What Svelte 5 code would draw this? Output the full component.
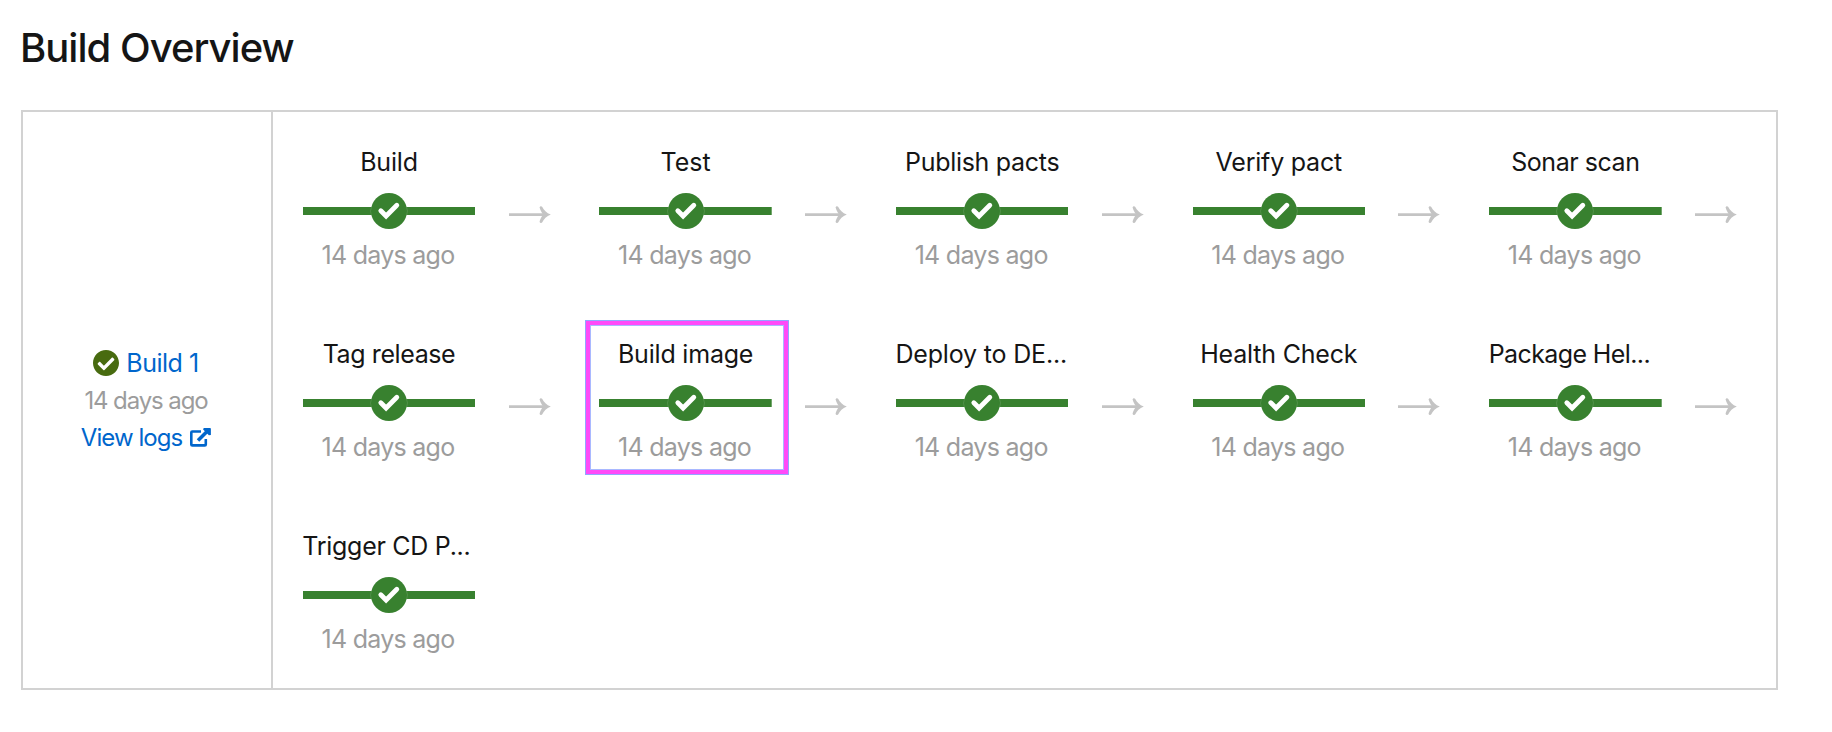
<script>
  const rows = [
    [
      { name: 'Build', tracking: -0.2 },
      { name: 'Test', tracking: 0 },
      { name: 'Publish pacts', tracking: -0.3 },
      { name: 'Verify pact', tracking: -0.22 },
      { name: 'Sonar scan', tracking: -0.45 }
    ],
    [
      { name: 'Tag release', tracking: -0.4 },
      { name: 'Build image', tracking: -0.2, selected: true },
      { name: 'Deploy to DE...', tracking: -0.18, clipped: true },
      { name: 'Health Check', tracking: -0.2 },
      { name: 'Package Hel...', tracking: -0.6, clipped: true }
    ],
    [{ name: 'Trigger CD P...', tracking: -0.28, clipped: true, last: true }]
  ];
</script>

<main>
  <h1>Build Overview</h1>
  <section class="panel">
    <aside>
      <div class="build">
        <svg class="status" viewBox="8 8 496 496"><path fill="#486b10" d="M504 256c0 136.967-111.033 248-248 248S8 392.967 8 256 119.033 8 256 8s248 111.033 248 248zM227.314 387.314l184-184c6.248-6.248 6.248-16.379 0-22.627l-22.627-22.627c-6.248-6.249-16.379-6.249-22.628 0L216 308.118l-70.059-70.059c-6.248-6.248-16.379-6.248-22.628 0l-22.627 22.627c-6.248 6.248-6.248 16.379 0 22.627l104 104c6.249 6.249 16.379 6.249 22.628.001z" /></svg>
        <a href="#build">Build 1</a>
      </div>
      <div class="when">14 days ago</div>
      <a class="logs" href="#logs">
        <span>View logs</span>
        <svg viewBox="0 0 21 19"><path fill="none" stroke="currentColor" stroke-width="2.6" d="M11 3.5H2.3a1 1 0 0 0-1 1V16.4a1 1 0 0 0 1 1H14.8a1 1 0 0 0 1-1V11" /><path fill="none" stroke="currentColor" stroke-width="3.6" d="M8 12.5L17.500 3" /><path fill="currentColor" d="M13.7 0H20a.9.9 0 0 1 .9.9V7l-2 .2-5.8-5.8z" /></svg>
      </a>
    </aside>
    <div class="pipeline">
      {#each rows as row}
        {#each row as step}
          <div class="cell">
            <div class="step" class:selected={step.selected}>
              <div class="name" class:clipped={step.clipped} style="letter-spacing: {step.tracking}px">{step.name}</div>
              <div class="track">
                <div class="dot">
                  <svg viewBox="0 0 36 36"><path fill="none" stroke="#fff" stroke-width="4.8" stroke-linecap="round" stroke-linejoin="miter" d="M9.800 17.700L15.100 23L25.800 12.300" /></svg>
                </div>
              </div>
              <div class="ago">14 days ago</div>
            </div>
            {#if !step.last}
              <svg class="arrow" viewBox="0 0 42 18"><path fill="none" stroke="#c4c4c4" stroke-width="2.8" d="M0 8.6H36" /><path fill="#c4c4c4" d="M30.600 1.600C30.600 0 32.600 -.4 33.300 1C34.800 4 37.500 7 41.800 8.600C37.500 10.300 34.800 13.200 33.300 16.300C32.600 17.600 30.600 17.200 30.600 15.600C31.200 13.200 32.500 10.800 34 8.600C32.500 6.500 31.200 3.800 30.600 1.600Z" /></svg>
            {/if}
          </div>
        {/each}
      {/each}
    </div>
  </section>
</main>

<style>
  :global(body) { margin: 0; background: #fff; }
  main {
    box-sizing: border-box;
    width: 1832px;
    height: 732px;
    padding: 24px 54px 0 21px;
    font-family: Inter, "Liberation Sans", sans-serif;
    font-size: 25px;
    color: #151515;
  }
  h1 {
    height: 86px;
    margin: 0 0 0 -1px;
    font-size: 40px;
    line-height: 48px;
    font-weight: 500;
    letter-spacing: -0.98px;
  }
  .panel {
    box-sizing: border-box;
    display: flex;
    width: 1757px;
    height: 580px;
    border: 2px solid #d2d2d2;
  }
  aside {
    box-sizing: border-box;
    flex: none;
    width: 250px;
    padding-right: 2px;
    border-right: 2px solid #d2d2d2;
    display: flex;
    flex-direction: column;
    align-items: center;
    justify-content: center;
    line-height: 37px;
    letter-spacing: -0.5px;
  }
  a { color: #0066cc; text-decoration: none; }
  .build { display: flex; align-items: center; gap: 7px; }
  .status { width: 26px; height: 26px; }
  .when { font-size: 24px; letter-spacing: -1.1px; color: #9c9c9c; }
  .logs { display: flex; align-items: center; gap: 8px; font-size: 24px; letter-spacing: -0.95px; }
  .logs svg { width: 21px; height: 19px; }
  .pipeline {
    flex: 1;
    min-width: 0;
    display: grid;
    grid-template-columns: repeat(5, 296.6px);
    grid-auto-rows: 192px;
    padding: 32px 0 0 29.8px;
  }
  .cell { display: flex; height: 125px; min-width: 0; }
  .step { position: relative; flex: none; width: 172.4px; }
  .selected::after {
    content: "";
    position: absolute;
    left: -14px;
    top: -16px;
    width: 194px;
    height: 145px;
    border: 5px solid #ff4af8;
    outline: 1px solid #92a5ff;
    outline-offset: -1px;
    box-shadow: inset 0 0 0 1px #a9b8ff;
  }
  .name {
    height: 37px;
    line-height: 37px;
    white-space: nowrap;
    text-align: center;
  }
  .clipped { margin-left: -0.5px; text-align: left; }
  .track {
    height: 36px;
    margin-top: 12px;
    display: flex;
    justify-content: center;
    background: linear-gradient(#38812f, #38812f) center / 100% 8px no-repeat;
  }
  .dot {
    width: 36px;
    height: 36px;
    border-radius: 50%;
    background: #38812f;
    box-shadow: 0 0 0 0.5px rgba(255, 255, 255, 0.25);
  }
  .dot svg { display: block; width: 36px; height: 36px; }
  .ago {
    margin: 8px 1px 0 -1px;
    line-height: 37px;
    text-align: center;
    letter-spacing: -0.72px;
    color: #9c9c9c;
  }
  .arrow { flex: none; width: 42px; height: 18px; margin: 62px 0 0 33.5px; }
</style>
